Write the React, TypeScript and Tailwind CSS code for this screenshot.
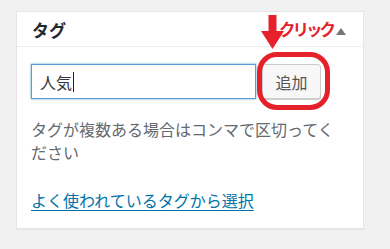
import React from "react";

export default function App() {
  const font = { fontFamily: '"Noto Sans CJK JP", "Noto Sans", sans-serif' };
  return (
    <div className="min-h-[249px] w-[390px] bg-[#f1f1f1] pt-[11px] pl-4" style={font}>
      <div className="relative w-[348px] border border-[#e5e5e5] bg-white shadow-[0_1px_1px_rgba(0,0,0,0.04)]">
        <div className="flex h-[35px] items-center justify-between border-b border-[#eeeeee] pl-[15px] pr-[17px]">
          <span className="text-[17px] font-bold leading-none text-[#23282d]">タグ</span>
          <div className="flex items-center">
            <span className="text-[16.5px] font-bold leading-none tracking-[-3px] text-[#e5222b]">クリック</span>
            <svg width="10" height="7" viewBox="0 0 10 7" className="ml-[3px] mt-[4px]">
              <polygon points="5,0 10,7 0,7" fill="#72777c" />
            </svg>
          </div>
        </div>
        <svg
          className="absolute left-[244px] top-[3px]"
          width="23"
          height="35"
          viewBox="0 0 23 35"
        >
          <rect x="7.5" y="0" width="8" height="17" fill="#e5222b" />
          <polygon points="0,16 23,16 11.5,34" fill="#e5222b" />
        </svg>
        <div className="px-[14px] pb-[16px] pt-[17px]">
          <div className="flex items-center">
            <div className="flex h-[35px] w-[225px] items-center border border-[#5b9dd9] px-[8px] shadow-[0_0_2px_rgba(30,140,190,0.8)]">
              <span className="text-[16px] leading-none text-[#32373c]">人気</span>
              <span className="ml-[1px] h-[20px] w-[1px] bg-[#222]" />
            </div>
            <div className="relative ml-[6px]">
              <button className="flex h-[35px] w-[59px] items-center justify-center rounded-[3px] border border-[#cccccc] bg-[#f7f7f7] text-[16px] leading-none text-[#555] shadow-[0_1px_0_#cccccc]">
                追加
              </button>
              <div className="pointer-events-none absolute left-[-5px] top-[-12px] h-[58px] w-[73px] rounded-[20px] border-[5px] border-[#e5222b]" />
            </div>
          </div>
          <p className="mt-[19px] text-[16px] leading-[23px] text-[#646970]">
            タグが複数ある場合はコンマで区切ってください
          </p>
          <p className="mt-[25px] text-[16px] leading-[23px]">
            <a href="#" className="text-[#0073aa] underline underline-offset-[3px]">
              よく使われているタグから選択
            </a>
          </p>
        </div>
      </div>
    </div>
  );
}
